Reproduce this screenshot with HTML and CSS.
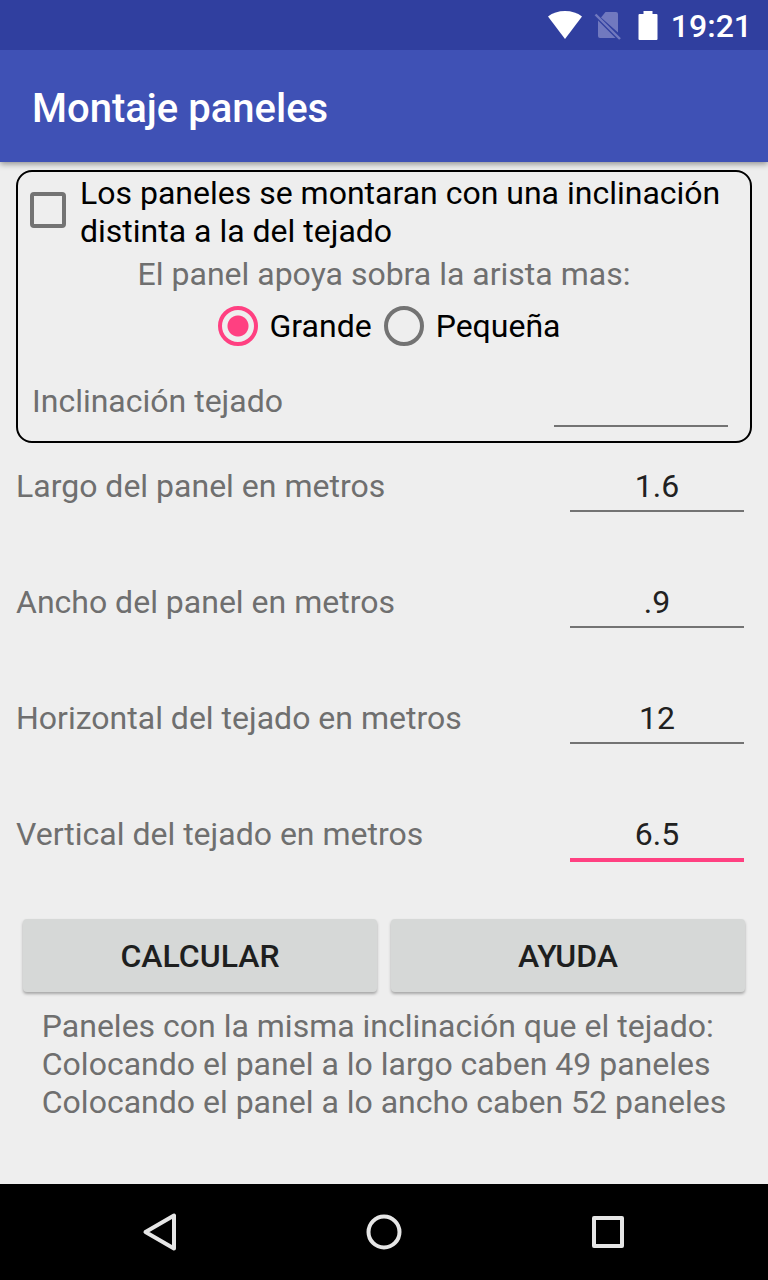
FILE: index.html
```html
<!DOCTYPE html>
<html lang="es">
<head>
<meta charset="utf-8">
<meta name="viewport" content="width=device-width, initial-scale=1">
<title>Montaje paneles</title>
<link rel="stylesheet" href="styles.css">
</head>
<body>
<div class="status-bar">
  <svg class="icon-wifi" width="36" height="30" viewBox="0 0 36 30" aria-hidden="true"><path d="M1 6.5Q8 1 18 1T35 6.5L18 29Z" fill="#fff"/></svg>
  <svg class="icon-sim" width="28" height="30" viewBox="0 0 28 30" aria-hidden="true">
    <path d="M7 7.500L11.500 2H22Q24 2 24 4V22.500ZM4 10.500L21.500 28H6Q4 28 4 26Z" fill="#7179bf"/>
    <path d="M1.500 4.500L26 29" stroke="#7179bf" stroke-width="2.400"/>
  </svg>
  <svg class="icon-battery" width="20" height="30" viewBox="0 0 20 30" aria-hidden="true"><path d="M5.500 0H14.500V3H18.500Q19.500 3 19.500 4V28Q19.500 29 18.500 29H1.500Q.5 29 .5 28V4Q.5 3 1.500 3H5.500Z" fill="#fff"/></svg>
  <span class="clock">19:21</span>
</div>
<header class="app-bar"><h1 class="app-title">Montaje paneles</h1></header>
<main class="content">
  <section class="mount-box">
    <label class="check-row">
      <input class="checkbox" type="checkbox">
      <span>Los paneles se montaran con una inclinación distinta a la del tejado</span>
    </label>
    <p class="hint" id="edge-hint">El panel apoya sobra la arista mas:</p>
    <div class="radio-row" role="radiogroup" aria-labelledby="edge-hint">
      <label class="radio-option"><input class="radio" type="radio" name="arista" checked><span>Grande</span></label>
      <label class="radio-option"><input class="radio" type="radio" name="arista"><span>Pequeña</span></label>
    </div>
    <div class="field">
      <label for="inclinacion">Inclinación tejado</label>
      <input class="number" id="inclinacion" type="text" inputmode="decimal">
    </div>
  </section>
  <section class="fields">
    <div class="field">
      <label for="largo">Largo del panel en metros</label>
      <input class="number" id="largo" type="text" inputmode="decimal" value="1.6">
    </div>
    <div class="field">
      <label for="ancho">Ancho del panel en metros</label>
      <input class="number" id="ancho" type="text" inputmode="decimal" value=".9">
    </div>
    <div class="field">
      <label for="horizontal">Horizontal del tejado en metros</label>
      <input class="number" id="horizontal" type="text" inputmode="decimal" value="12">
    </div>
    <div class="field">
      <label for="vertical">Vertical del tejado en metros</label>
      <input class="number number-active" id="vertical" type="text" inputmode="decimal" value="6.5">
    </div>
  </section>
  <div class="actions">
    <button class="button" type="button">CALCULAR</button>
    <button class="button" type="button">AYUDA</button>
  </div>
  <p class="result">Paneles con la misma inclinación que el tejado:<br>Colocando el panel a lo largo caben 49 paneles<br>Colocando el panel a lo ancho caben 52 paneles</p>
</main>
<nav class="nav-bar">
  <button class="nav-button" type="button" aria-label="Atrás"><svg width="40" height="40" viewBox="0 0 40 40" fill="none" stroke="#e6e6e6" stroke-width="4" stroke-linejoin="round"><path d="M34 3.500V36.500L5.500 20Z"/></svg></button>
  <button class="nav-button" type="button" aria-label="Inicio"><svg width="40" height="40" viewBox="0 0 40 40" fill="none" stroke="#e6e6e6" stroke-width="4"><circle cx="20" cy="20" r="15.500"/></svg></button>
  <button class="nav-button" type="button" aria-label="Recientes"><svg width="40" height="40" viewBox="0 0 40 40" fill="none" stroke="#e6e6e6" stroke-width="4" stroke-linejoin="round"><path d="M6 6H34V34H6Z"/></svg></button>
</nav>
</body>
</html>
```
FILE: styles.css
```css
* {
  box-sizing: border-box;
}

body {
  margin: 0;
  min-height: 100vh;
  display: flex;
  flex-direction: column;
  background: #eeeeee;
  color: #6f6f6f;
  font: 32px/38px Roboto, sans-serif;
}

.status-bar {
  position: relative;
  z-index: 1;
  height: 50px;
  padding: 2px 16px 0;
  display: flex;
  align-items: center;
  justify-content: flex-end;
  background: #303f9f;
  color: #fff;
}

.icon-wifi {
  margin-bottom: 2px;
}

.icon-sim {
  margin: 0 16px 2px 11px;
}

.icon-battery {
  margin-right: 13px;
}

.clock {
  font-weight: 500;
}

.app-bar {
  height: 112px;
  padding: 6px 32px 0;
  display: flex;
  align-items: center;
  background: #3f51b5;
  box-shadow: 0 2px 6px rgba(0, 0, 0, 0.4);
}

.app-title {
  margin: 0;
  color: #fff;
  font-size: 40px;
  font-weight: 500;
  line-height: 48px;
}

.content {
  flex: 1;
  padding: 8px 16px;
}

.mount-box {
  padding: 2px 14px 14px;
  border: 2px solid #000;
  border-radius: 16px;
}

.check-row {
  display: flex;
  align-items: flex-start;
  gap: 14px;
  margin-left: -2px;
  color: #000;
}

.checkbox,
.radio {
  appearance: none;
  flex: none;
  margin: 0;
  border: 4px solid #737373;
}

.checkbox {
  width: 36px;
  height: 36px;
  margin-top: 18px;
  border-radius: 4px;
}

.checkbox:checked {
  border-color: #ff4081;
  background: #ff4081;
}

.hint {
  margin: 5px 0 0;
  text-align: center;
}

.radio-row {
  display: flex;
  justify-content: center;
  gap: 12px;
  margin: 13px 0 36px;
  padding-left: 10px;
  color: #000;
}

.radio-option {
  display: flex;
  align-items: center;
  gap: 12px;
}

.radio {
  width: 40px;
  height: 40px;
  border-radius: 50%;
}

.radio:checked {
  border-color: #ff4081;
  background: radial-gradient(circle, #ff4081 10px, transparent 11px);
}

.field {
  display: flex;
  align-items: flex-start;
  justify-content: space-between;
  padding-right: 8px;
}

.number {
  width: 174px;
  height: 45px;
  margin: 0;
  padding: 0 0 5px;
  border: 0;
  border-bottom: 2px solid #737373;
  background: none;
  color: #212121;
  font: inherit;
  text-align: center;
  outline: none;
}

.number:focus,
.number-active {
  height: 47px;
  border-bottom: 4px solid #ff4081;
}

.fields {
  display: grid;
  grid-auto-rows: 116px;
  padding-top: 24px;
}

.actions {
  display: grid;
  grid-template-columns: 1fr 1fr;
  gap: 14px;
  margin: -12px 7px 0;
}

.button {
  height: 73px;
  padding: 0;
  border: 0;
  border-radius: 4px;
  background: #d6d8d7;
  box-shadow: 0 2px 3px rgba(0, 0, 0, 0.3);
  color: #1e1f1f;
  font: inherit;
  font-weight: 500;
}

.result {
  width: fit-content;
  margin: 15px auto 0;
}

.nav-bar {
  height: 96px;
  padding: 0 48px;
  display: grid;
  grid-template-columns: repeat(3, 1fr);
  background: #000;
}

.nav-button {
  display: flex;
  align-items: center;
  justify-content: center;
  padding: 0;
  border: 0;
  background: none;
}
```
